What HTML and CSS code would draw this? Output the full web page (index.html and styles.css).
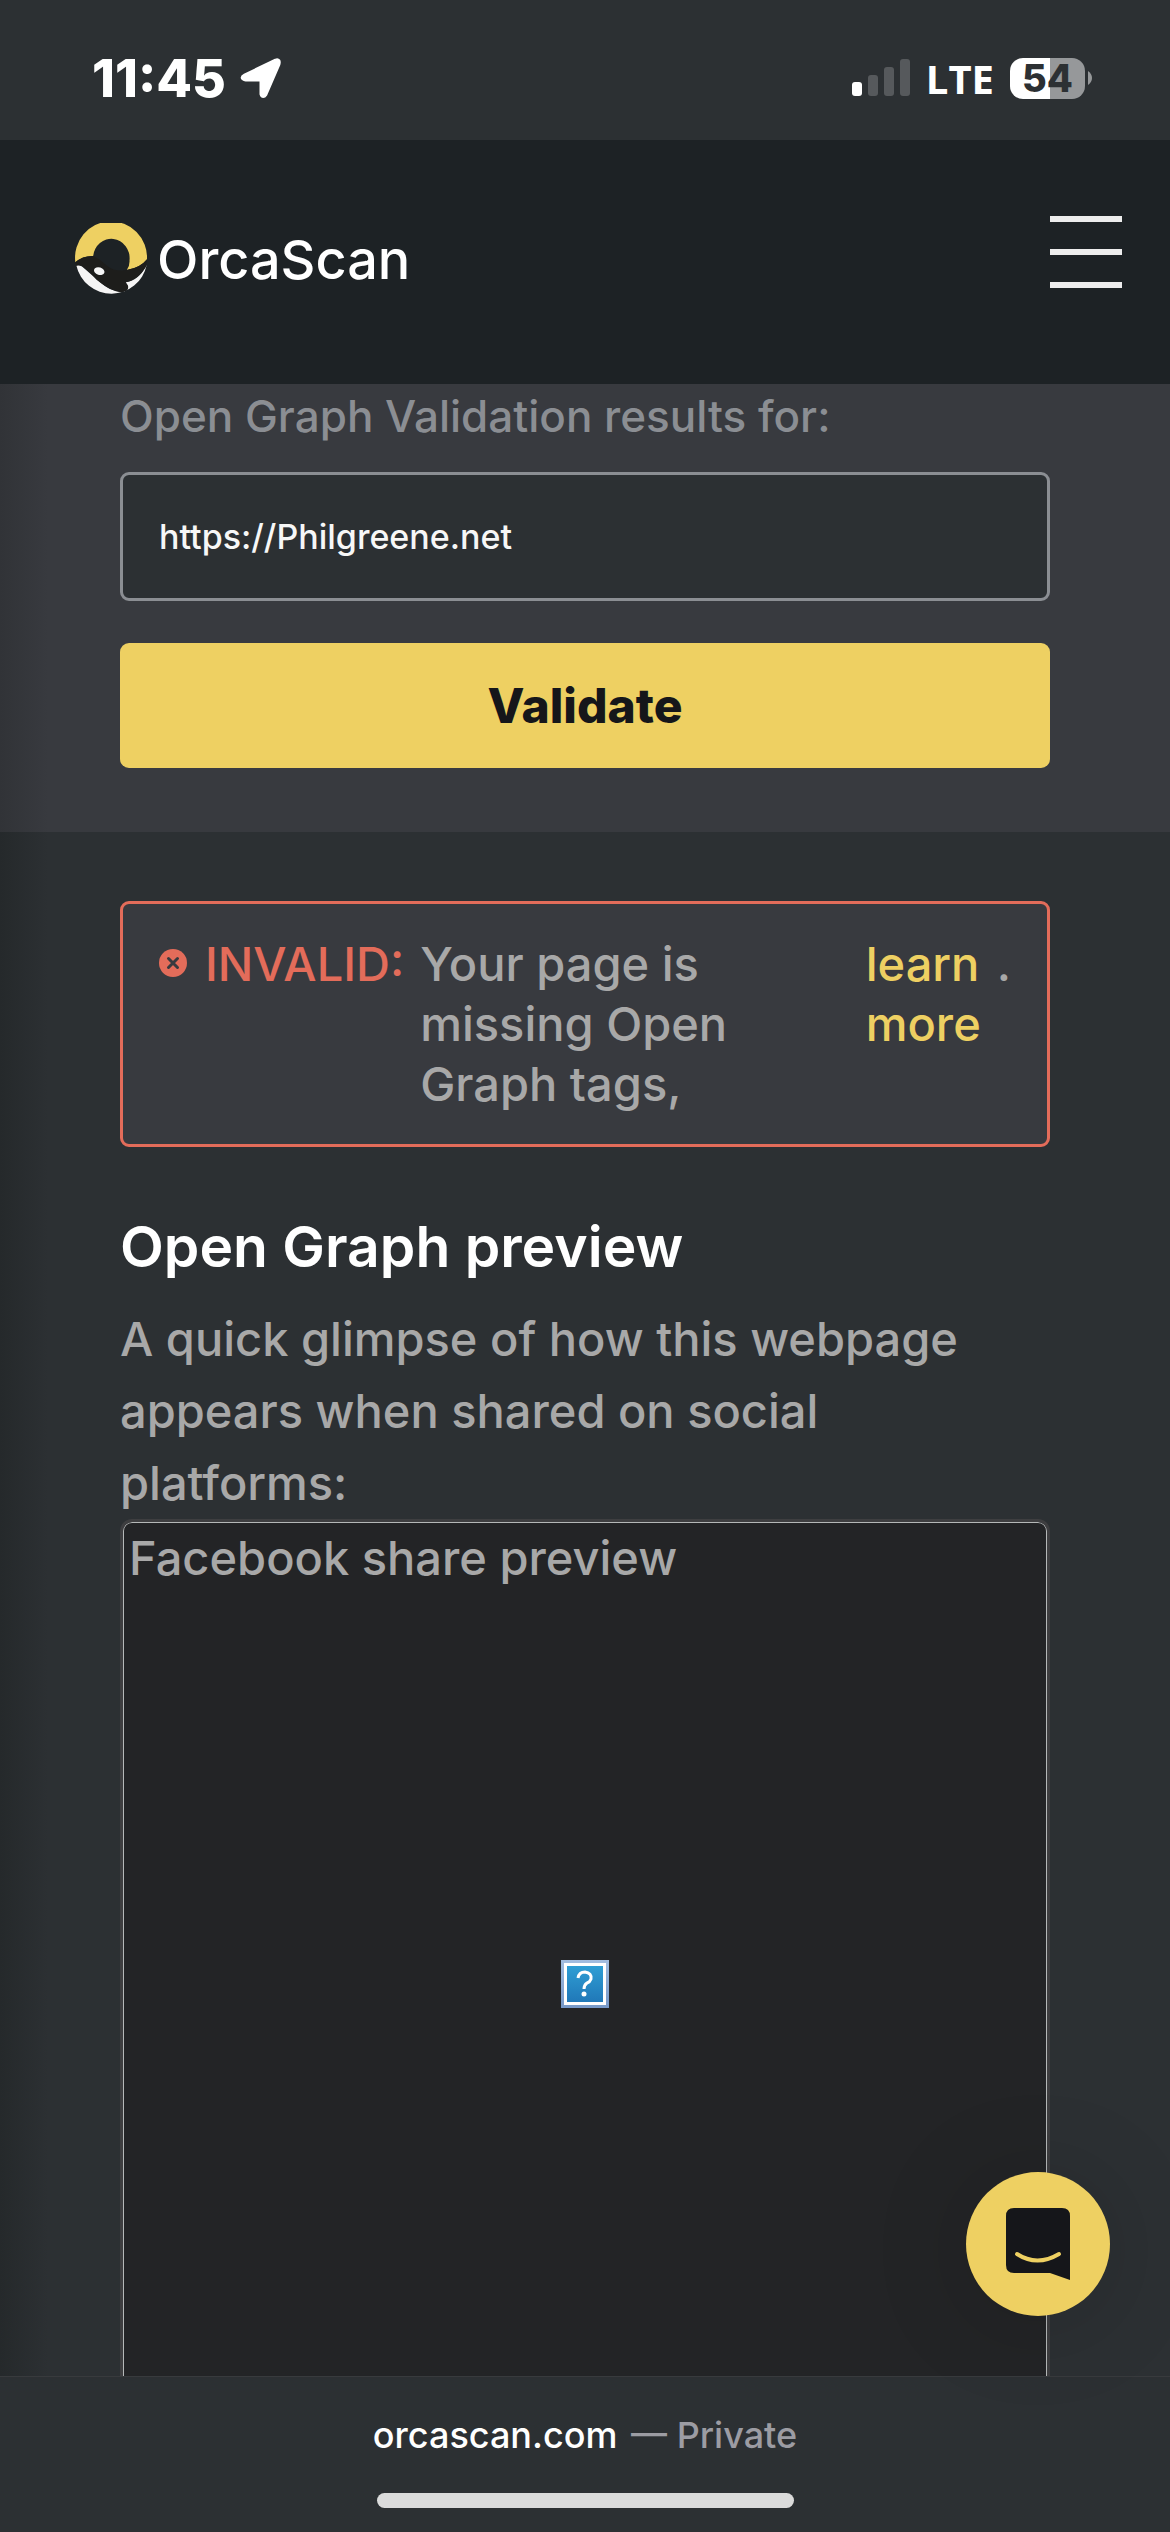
FILE: index.html
```html
<!DOCTYPE html>
<html lang="en">
<head>
<meta charset="utf-8">
<meta name="viewport" content="width=device-width, initial-scale=1">
<title>Open Graph Validator | OrcaScan</title>
<link rel="stylesheet" href="styles.css">
</head>
<body>
<div class="status-bar">
  <div class="status-left">
    <span class="clock">11:45</span>
    <svg class="location-icon" viewBox="0 0 42 43" aria-hidden="true"><path d="M5 19 36 4 Q39 3 38 7 L25 37 Q23 40 22 37 V22 H6 Q1 21 5 19Z" fill="#fff" stroke="#fff" stroke-width="5" stroke-linejoin="round"/></svg>
  </div>
  <div class="status-right">
    <svg class="signal-icon" viewBox="0 0 58 38" aria-hidden="true"><rect y="23" width="10" height="14" rx="3" fill="#fff"/><g fill="#56595c"><rect x="16" y="16" width="10" height="21" rx="3"/><rect x="32" y="8" width="10" height="29" rx="3"/><rect x="48" width="10" height="37" rx="3"/></g></svg>
    <span class="network">LTE</span>
    <span class="battery"><span class="battery-level">54</span><svg class="battery-tip" viewBox="0 0 4 14" aria-hidden="true"><path d="M0 0Q4 3 4 7T0 14Z" fill="#96989a"/></svg></span>
  </div>
</div>

<header class="site-header">
  <a class="brand" href="#">
    <svg class="brand-mark" viewBox="75 70 214 217" aria-hidden="true">
      <path d="M76 187A107 108 0 1 1 289 178Q270 203 229 210Q238 197 237 181A54 57 0 0 0 129 168Q98 167 76 187Z" fill="#eed062"/>
      <path d="M79 196Q85 194 96 199Q120 220 150 246Q180 274 213 275Q233 274 233 259L226 246Q265 241 288 195A107 108 0 0 1 79 196Z" fill="#f5f5f5"/>
      <path d="M76 187Q98 167 129 168Q153 179 170 197Q193 216 229 210Q270 203 289 178L286 200Q263 239 224 247Q234 254 233 263Q229 276 207 275Q175 269 139 239Q116 211 94 197Q84 193 79 198Z" fill="#1d1d1b"/>
      <ellipse cx="147" cy="213" rx="16" ry="11" transform="rotate(18 147 213)" fill="#f5f5f5"/>
    </svg>
    <span class="brand-name">OrcaScan</span>
  </a>
  <button class="menu-button" type="button" aria-label="Menu"><span></span><span></span><span></span></button>
</header>

<main class="content">
  <form class="validator">
    <label class="validator-label" for="url">Open Graph Validation results for:</label>
    <input class="validator-input" id="url" type="text" value="https://Philgreene.net">
    <button class="validator-button" type="button">Validate</button>
  </form>

  <section class="results">
    <div class="alert" role="alert">
      <svg class="alert-icon" viewBox="0 0 28 28" aria-hidden="true"><circle cx="14" cy="14" r="14" fill="#e36c5a"/><path d="M9.500 9.500 18.500 18.500M18.500 9.500 9.500 18.500" stroke="#383a3f" stroke-width="3" stroke-linecap="round"/></svg>
      <strong class="alert-title">INVALID:</strong>
      <span class="alert-text">Your page is missing Open Graph tags,</span>
      <a class="alert-link" href="#">learn more</a>
      <span>.</span>
    </div>
    <h2 class="preview-title">Open Graph preview</h2>
    <p class="preview-intro">A quick glimpse of how this webpage appears when shared on social platforms:</p>
    <figure class="share-preview">
      <figcaption class="share-caption">Facebook share preview</figcaption>
      <svg class="missing-image" viewBox="0 0 48 48" role="img" aria-label="Missing image">
        <defs>
          <linearGradient id="frame" x2="0" y2="1"><stop stop-color="#a3bde0"/><stop offset="1" stop-color="#7698c8"/></linearGradient>
          <linearGradient id="fill" x2="0" y2="1"><stop stop-color="#2f9ed4"/><stop offset="1" stop-color="#2078b8"/></linearGradient>
        </defs>
        <path d="M0 0H48V48H0Z" fill="url(#frame)"/><path d="M3 3H45V45H3Z" fill="#fff"/><path d="M6 6H42V42H6Z" fill="url(#fill)"/>
        <path d="M17 18Q18 12 24 12Q31 13 30 19Q29 22 26 23Q23 25 23 29" fill="none" stroke="#fff" stroke-width="3"/><circle cx="23" cy="34" r="2.500" fill="#fff"/>
      </svg>
    </figure>
  </section>
</main>

<footer class="browser-bar">
  <div class="address"><span class="domain">orcascan.com</span> <span>— Private</span></div>
  <div class="home-indicator"></div>
</footer>

<button class="chat-launcher" type="button" aria-label="Open chat">
  <svg class="chat-icon" viewBox="0 0 64 72" aria-hidden="true"><path d="M8 0H56Q64 0 64 8V72L44 65H8Q0 65 0 57V8Q0 0 8 0Z" fill="#15161a"/><path d="M11 46Q31 59 53 46" fill="none" stroke="#eed062" stroke-width="4" stroke-linecap="round"/></svg>
</button>
</body>
</html>
```
FILE: styles.css
```css
* {
  box-sizing: border-box;
}

body {
  margin: 0;
  height: 100vh;
  display: flex;
  flex-direction: column;
  overflow: hidden;
  background: #2c3033;
  color: #a8a8a8;
  font-family: Inter, "Liberation Sans", sans-serif;
  font-size: 47px;
  font-weight: 500;
}

button {
  border: 0;
  font-family: inherit;
  cursor: pointer;
}

svg {
  display: block;
  flex: none;
}

a {
  text-decoration: none;
}

.status-bar {
  flex: none;
  display: flex;
  justify-content: space-between;
  align-items: center;
  height: 140px;
  padding: 16px 78px 0 92px;
  color: #fff;
}

.status-left,
.status-right {
  display: flex;
  align-items: center;
}

.status-left {
  gap: 14px;
}

.status-right {
  gap: 16px;
}

.clock {
  font-size: 52px;
  font-weight: 800;
}

.location-icon {
  width: 42px;
}

.signal-icon {
  width: 58px;
}

.network {
  font-family: "Open Sans", sans-serif;
  font-size: 40px;
  font-weight: 700;
}

.battery {
  display: flex;
  align-items: center;
  gap: 3px;
}

.battery-level {
  width: 75px;
  height: 41px;
  border-radius: 13px;
  background: linear-gradient(90deg, #fff 54%, #96989a 54%);
  color: #2c3033;
  font-size: 38px;
  font-weight: 800;
  line-height: 41px;
  text-align: center;
}

.battery-tip {
  width: 4px;
}

.site-header {
  flex: none;
  display: flex;
  justify-content: space-between;
  align-items: center;
  height: 244px;
  padding: 0 48px 6px 75px;
  background: #1d2225;
}

.brand {
  display: flex;
  align-items: center;
  gap: 10px;
  color: #fff;
}

.brand-mark {
  width: 72px;
}

.brand-name {
  font-size: 54px;
}

.menu-button {
  display: flex;
  flex-direction: column;
  gap: 27px;
  width: 72px;
  margin-bottom: 14px;
  padding: 0;
  background: none;
}

.menu-button span {
  height: 6px;
  background: #ededed;
}

.content {
  flex: 1;
  min-height: 0;
  overflow: hidden;
  background: linear-gradient(90deg, #25292b, #2c3033 48px);
}

.validator {
  display: flex;
  flex-direction: column;
  padding: 0 120px 64px;
  background: linear-gradient(90deg, #313337, #383a3f 48px);
}

.validator-label {
  padding-bottom: 24px;
  color: #8b8e93;
  font-size: 44px;
  line-height: 64px;
}

.validator-input {
  width: 100%;
  height: 129px;
  margin-bottom: 42px;
  padding: 0 36px;
  border: 3px solid #8b8e93;
  border-radius: 9px;
  background: #2c3033;
  color: #f7f7f7;
  font-family: inherit;
  font-size: 34px;
  font-weight: 500;
}

.validator-button {
  height: 125px;
  border-radius: 9px;
  background: #eed062;
  color: #15161a;
  font-size: 48px;
  font-weight: 800;
}

.results {
  padding: 69px 120px 0;
}

.alert {
  display: grid;
  grid-template-columns: auto auto 1fr min-content auto;
  align-items: start;
  column-gap: 16px;
  padding: 30px 36px;
  border: 3px solid #e36c5a;
  border-radius: 9px;
  background: #383a3f;
  line-height: 60px;
}

.alert-icon {
  width: 28px;
  margin: 15px 2px 0 0;
}

.alert-title {
  color: #e36c5a;
  font-weight: 500;
}

.alert-link {
  color: #eed062;
}

.preview-title {
  margin: 60px 0 0;
  color: #fff;
  font-size: 57px;
  font-weight: 600;
  line-height: 80px;
}

.preview-intro {
  margin: 16px 0 0;
  line-height: 72px;
}

.share-preview {
  position: relative;
  display: grid;
  place-items: center;
  height: 930px;
  margin: 0;
  border: 3px solid #3e3e40;
  border-radius: 12px;
  background: #232426;
  box-shadow: inset 0 0 0 1px #b5b8b8;
}

.share-caption {
  position: absolute;
  top: 0;
  left: 6px;
  line-height: 72px;
}

.missing-image {
  width: 48px;
}

.browser-bar {
  flex: none;
  display: flex;
  flex-direction: column;
  align-items: center;
  justify-content: space-between;
  height: 156px;
  padding: 36px 0 24px;
  border-top: 1px solid #383a3d;
  color: #9c9ca3;
  font-size: 36px;
  line-height: 44px;
}

.domain {
  margin-right: 4px;
  color: #fff;
}

.home-indicator {
  width: 417px;
  height: 15px;
  border-radius: 8px;
  background: #dbdbdb;
}

.chat-launcher {
  position: fixed;
  right: 60px;
  bottom: 216px;
  display: grid;
  place-items: center;
  width: 144px;
  height: 144px;
  padding: 0;
  border-radius: 50%;
  background: #eed062;
  box-shadow: 0 6px 100px rgba(0, 0, 0, 0.16);
}

.chat-icon {
  width: 64px;
}
```
